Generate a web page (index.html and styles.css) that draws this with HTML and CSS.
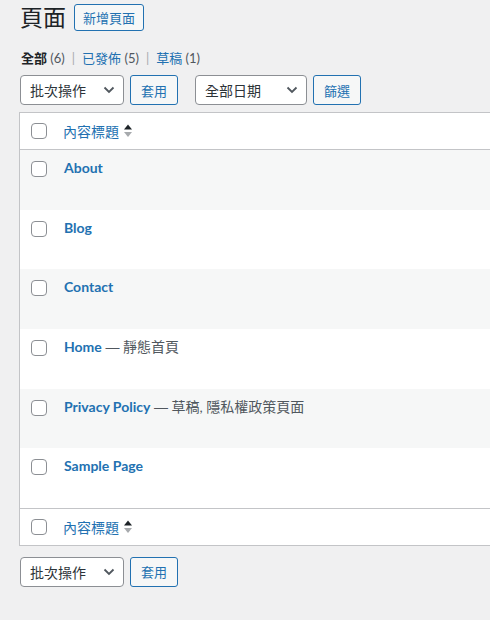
FILE: index.html
```html
<!DOCTYPE html>
<html lang="zh-Hant">
<head>
<meta charset="utf-8">
<title>頁面</title>
<link rel="stylesheet" href="styles.css">
</head>
<body>
<div class="wrap">
  <div class="page-head">
    <h1 class="page-title">頁面</h1>
    <a class="btn btn-small">新增頁面</a>
  </div>

  <ul class="subsubsub">
    <li><span class="current">全部</span> <span class="count">(6)</span></li>
    <li class="sep">|</li>
    <li><a class="link">已發佈</a> <span class="count">(5)</span></li>
    <li class="sep">|</li>
    <li><a class="link">草稿</a> <span class="count">(1)</span></li>
  </ul>

  <div class="tablenav top">
    <div class="actions">
      <div class="select w-bulk"><span>批次操作</span><svg class="chev" viewBox="0 0 12 8" width="12" height="8"><path d="M1.5 1.5 L6 6 L10.5 1.5" fill="none" stroke="#50575e" stroke-width="1.8"/></svg></div>
      <a class="btn">套用</a>
    </div>
    <div class="actions">
      <div class="select w-date"><span>全部日期</span><svg class="chev" viewBox="0 0 12 8" width="12" height="8"><path d="M1.5 1.5 L6 6 L10.5 1.5" fill="none" stroke="#50575e" stroke-width="1.8"/></svg></div>
      <a class="btn">篩選</a>
    </div>
  </div>

  <div class="list-table">
    <div class="row head">
      <span class="cb"></span>
      <a class="col-title">內容標題</a>
      <svg class="sort" viewBox="0 0 8 14" width="8" height="14"><polygon points="0,5.5 4,0.5 8,5.5" fill="#1d2327"/><polygon points="0,8 8,8 4,13" fill="#a7aaad"/></svg>
    </div>
    <div class="row item alt"><span class="cb"></span><div class="title"><a class="name">About</a></div></div>
    <div class="row item"><span class="cb"></span><div class="title"><a class="name">Blog</a></div></div>
    <div class="row item alt"><span class="cb"></span><div class="title"><a class="name">Contact</a></div></div>
    <div class="row item"><span class="cb"></span><div class="title"><a class="name">Home</a><span class="state"> <span class="dash">—</span> 靜態首頁</span></div></div>
    <div class="row item alt"><span class="cb"></span><div class="title"><a class="name">Privacy Policy</a><span class="state"> <span class="dash">—</span> 草稿, 隱私權政策頁面</span></div></div>
    <div class="row item"><span class="cb"></span><div class="title"><a class="name">Sample Page</a></div></div>
    <div class="row head foot">
      <span class="cb"></span>
      <a class="col-title">內容標題</a>
      <svg class="sort" viewBox="0 0 8 14" width="8" height="14"><polygon points="0,5.5 4,0.5 8,5.5" fill="#1d2327"/><polygon points="0,8 8,8 4,13" fill="#a7aaad"/></svg>
    </div>
  </div>

  <div class="tablenav bottom">
    <div class="actions">
      <div class="select w-bulk"><span>批次操作</span><svg class="chev" viewBox="0 0 12 8" width="12" height="8"><path d="M1.5 1.5 L6 6 L10.5 1.5" fill="none" stroke="#50575e" stroke-width="1.8"/></svg></div>
      <a class="btn">套用</a>
    </div>
  </div>
</div>
</body>
</html>
```

FILE: styles.css
```css
html, body {
  margin: 0;
  padding: 0;
}
body {
  background: #f0f0f1;
  color: #3c434a;
  font-family: Lato, "Noto Sans CJK TC", sans-serif;
  font-size: 13px;
  overflow: hidden;
}
.wrap {
  padding-left: 20px;
}
.page-head {
  display: flex;
  align-items: center;
  margin-top: 4px;
  height: 27px;
}
.page-title {
  margin: 0;
  font-size: 23px;
  font-weight: 400;
  line-height: 29px;
  color: #1d2327;
}
.btn {
  display: inline-flex;
  align-items: center;
  justify-content: center;
  box-sizing: border-box;
  height: 30px;
  width: 48px;
  border: 1px solid #2271b1;
  border-radius: 3px;
  background: #f6f7f7;
  color: #2271b1;
  font-size: 13px;
}
.btn-small {
  height: 27px;
  width: 70px;
  margin-left: 8px;
}
.subsubsub {
  list-style: none;
  margin: 18px 0 0;
  padding: 0 0 0 1px;
  display: flex;
  height: 18px;
  line-height: 18px;
  font-size: 13px;
  white-space: pre;
}
.subsubsub .current {
  color: #1d2327;
  font-weight: 700;
}
.subsubsub .link {
  color: #2271b1;
}
.subsubsub .count {
  color: #50575e;
}
.subsubsub .sep {
  color: #a7aaad;
  padding: 0 7px;
}
.tablenav {
  display: flex;
  height: 30px;
  gap: 17px;
}
.tablenav.top {
  margin-top: 8px;
}
.tablenav.bottom {
  margin-top: 11px;
}
.actions {
  display: flex;
  gap: 6px;
}
.select {
  box-sizing: border-box;
  height: 30px;
  display: flex;
  align-items: center;
  justify-content: space-between;
  padding: 0 8px 0 9px;
  border: 1px solid #8c8f94;
  border-radius: 4px;
  background: #fff;
  color: #2c3338;
  font-size: 14px;
}
.w-bulk { width: 104px; }
.w-date { width: 112px; }
.chev { display: block; }

.list-table {
  margin-top: 7px;
  margin-left: -1px;
  border: 1px solid #c3c4c7;
  border-right: 0;
  background: #fff;
}
.row {
  display: flex;
  box-sizing: border-box;
}
.row.head {
  height: 37px;
  align-items: center;
  border-bottom: 1px solid #c3c4c7;
}
.row.foot {
  height: 37px;
  border-bottom: 0;
  border-top: 1px solid #c3c4c7;
}
.row.item {
  height: 59.67px;
  align-items: flex-start;
  padding-top: 8px;
}
.row.alt {
  background: #f6f7f7;
}
.cb {
  box-sizing: border-box;
  width: 16px;
  height: 16px;
  margin-left: 11px;
  border: 1px solid #8c8f94;
  border-radius: 4px;
  background: #fff;
  flex: none;
}
.row.item .cb {
  margin-top: 3px;
}
.col-title {
  margin-left: 16px;
  color: #2271b1;
  font-size: 14px;
}
.sort {
  margin-left: 5px;
  display: block;
}
.title {
  margin-left: 17px;
  line-height: 20px;
  font-size: 14px;
}
.name {
  color: #2271b1;
  font-weight: 700;
}
.state {
  color: #50575e;
}
.dash {
  font-family: "Liberation Sans", sans-serif;
}
```
